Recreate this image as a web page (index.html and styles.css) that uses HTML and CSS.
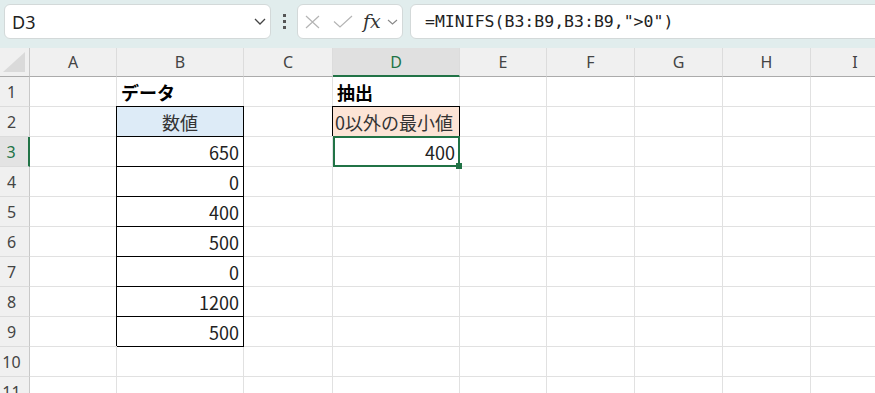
FILE: index.html
```html
<!DOCTYPE html>
<html lang="ja">
<head>
  <meta charset="UTF-8">
  <meta name="viewport" content="width=device-width, initial-scale=1.0">
  <title>MINIFS</title>
  <link rel="stylesheet" href="styles.css">
</head>
<body>
  <div class="ribbon">
    <div class="namebox">
      <span>D3</span>
      <svg class="chev" width="12" height="7" viewBox="0 0 12 7"><polyline points="1,1 6,6 11,1" fill="none" stroke="#444" stroke-width="1.3"/></svg>
    </div>
    <div class="more">
      <svg width="3" height="15" viewBox="0 0 3 15"><rect x="0" y="0" width="3" height="3" fill="#555"/><rect x="0" y="6" width="3" height="3" fill="#555"/><rect x="0" y="12" width="3" height="3" fill="#555"/></svg>
    </div>
    <div class="fxbox">
      <svg class="ico-x" width="15" height="14" viewBox="0 0 15 14"><path d="M1 1 L14 13 M14 1 L1 13" stroke="#b4b4b4" stroke-width="1.2" fill="none"/></svg>
      <svg class="ico-ok" width="20" height="13" viewBox="0 0 20 13"><polyline points="1,6.5 7,12 19,1" fill="none" stroke="#b4b4b4" stroke-width="1.2"/></svg>
      <span class="fx">fx</span>
      <svg class="ico-dd" width="11" height="6" viewBox="0 0 11 6"><polyline points="1,1 5.5,5 10,1" fill="none" stroke="#888" stroke-width="1.1"/></svg>
    </div>
    <div class="formula">=MINIFS(B3:B9,B3:B9,"&gt;0")</div>
  </div>

  <div class="sheet">
    <div class="head corner"><svg width="22" height="20" viewBox="0 0 22 20"><polygon points="22,0 22,20 0,20" fill="#dadada"/></svg></div>
    <div class="head">A</div><div class="head">B</div><div class="head">C</div><div class="head sel">D</div><div class="head">E</div><div class="head">F</div><div class="head">G</div><div class="head">H</div><div class="head">I</div>

    <div class="rh">1</div><div class="c"></div><div class="c bold">データ</div><div class="c"></div><div class="c bold">抽出</div><div class="c"></div><div class="c"></div><div class="c"></div><div class="c"></div><div class="c"></div>
    <div class="rh">2</div><div class="c"></div><div class="c box blue">数値</div><div class="c"></div><div class="c box orange">0以外の最小値</div><div class="c"></div><div class="c"></div><div class="c"></div><div class="c"></div><div class="c"></div>
    <div class="rh sel">3</div><div class="c"></div><div class="c box num">650</div><div class="c"></div><div class="c num active">400</div><div class="c"></div><div class="c"></div><div class="c"></div><div class="c"></div><div class="c"></div>
    <div class="rh">4</div><div class="c"></div><div class="c box num">0</div><div class="c"></div><div class="c"></div><div class="c"></div><div class="c"></div><div class="c"></div><div class="c"></div><div class="c"></div>
    <div class="rh">5</div><div class="c"></div><div class="c box num">400</div><div class="c"></div><div class="c"></div><div class="c"></div><div class="c"></div><div class="c"></div><div class="c"></div><div class="c"></div>
    <div class="rh">6</div><div class="c"></div><div class="c box num">500</div><div class="c"></div><div class="c"></div><div class="c"></div><div class="c"></div><div class="c"></div><div class="c"></div><div class="c"></div>
    <div class="rh">7</div><div class="c"></div><div class="c box num">0</div><div class="c"></div><div class="c"></div><div class="c"></div><div class="c"></div><div class="c"></div><div class="c"></div><div class="c"></div>
    <div class="rh">8</div><div class="c"></div><div class="c box num">1200</div><div class="c"></div><div class="c"></div><div class="c"></div><div class="c"></div><div class="c"></div><div class="c"></div><div class="c"></div>
    <div class="rh">9</div><div class="c"></div><div class="c box num">500</div><div class="c"></div><div class="c"></div><div class="c"></div><div class="c"></div><div class="c"></div><div class="c"></div><div class="c"></div>
    <div class="rh">10</div><div class="c"></div><div class="c"></div><div class="c"></div><div class="c"></div><div class="c"></div><div class="c"></div><div class="c"></div><div class="c"></div><div class="c"></div>
    <div class="rh">11</div><div class="c"></div><div class="c"></div><div class="c"></div><div class="c"></div><div class="c"></div><div class="c"></div><div class="c"></div><div class="c"></div><div class="c"></div>
  </div>
</body>
</html>
```

FILE: styles.css
```css
body {
  margin: 0;
  width: 875px;
  height: 393px;
  overflow: hidden;
  background: #fff;
  font-family: "Noto Sans", "Noto Sans CJK JP", sans-serif;
  color: #222;
}
.ribbon {
  display: flex;
  align-items: flex-start;
  width: 900px;
  height: 48px;
  box-sizing: border-box;
  padding: 4px 0 0 4px;
  background: #e1eded;
}
.namebox,
.fxbox,
.formula {
  height: 35px;
  box-sizing: border-box;
  background: #fff;
  border: 1px solid #d3d9d9;
  border-radius: 6px;
  display: flex;
  align-items: center;
}
.namebox {
  width: 267px;
  justify-content: space-between;
  padding: 0 4px 0 7px;
  font-size: 18px;
  color: #222;
}
.more {
  width: 26px;
  height: 35px;
  display: flex;
  align-items: center;
  justify-content: center;
}
.fxbox {
  width: 106px;
  padding-left: 7px;
}
.ico-ok {
  margin-left: 13px;
}
.fx {
  margin-left: 10px;
  font-family: "DejaVu Serif", "Liberation Serif", serif;
  font-style: italic;
  font-size: 19px;
  color: #333;
  line-height: 1;
}
.ico-dd {
  margin-left: 6px;
}
.formula {
  flex: 1;
  margin-left: 7px;
  padding-left: 14px;
  font-family: "DejaVu Sans Mono", "Liberation Mono", monospace;
  font-size: 16.5px;
  color: #222;
}
.sheet {
  display: grid;
  grid-template-columns: 30px 87px 127px 89px 127px 87px 88px 88px 88px 89px;
  grid-template-rows: 29px repeat(11, 30px);
  width: 900px;
}
.sheet > div {
  box-sizing: border-box;
  display: flex;
  align-items: center;
  white-space: nowrap;
}
.head {
  background: #f0f0f0;
  border-right: 1px solid #dcdcdc;
  border-bottom: 1px solid #ababab;
  justify-content: center;
  font-size: 16px;
  color: #444;
}
.head.corner {
  border-right-color: #c8c8c8;
  justify-content: flex-end;
  align-items: flex-end;
  padding: 0 4px 4px 0;
}
.head.sel {
  background: #e0e0e0;
  color: #217346;
  border-bottom: 2px solid #217346;
}
.rh {
  background: #f0f0f0;
  border-right: 1px solid #c8c8c8;
  border-bottom: 1px solid #dcdcdc;
  justify-content: center;
  padding-right: 6px;
  font-size: 16px;
  color: #444;
}
.rh.sel {
  background: #e3e3e3;
  color: #217346;
  border-right: 2px solid #217346;
}
.c {
  background: #fff;
  border-right: 1px solid #e1e1e1;
  border-bottom: 1px solid #e1e1e1;
  padding: 0 4px 0 4px;
  font-family: "Noto Sans CJK JP", sans-serif;
  font-size: 18px;
  color: #222;
}
.bold {
  font-weight: bold;
  color: #000;
}
.num {
  justify-content: flex-end;
}
.box {
  border-right-color: #000;
  border-bottom-color: #000;
  box-shadow: -1px -1px 0 #000, 0 -1px 0 #000;
}
.blue {
  background: #ddebf7;
  justify-content: center;
  color: #333;
}
.orange {
  background: #fce4d6;
  padding-left: 2px;
  color: #333;
}
.active {
  position: relative;
}
.active::after {
  content: "";
  position: absolute;
  top: -1px;
  left: 0;
  right: -1px;
  bottom: -1px;
  border: 2px solid #217346;
}
.active::before {
  content: "";
  position: absolute;
  right: -3px;
  bottom: -3px;
  width: 6px;
  height: 6px;
  background: #217346;
  z-index: 1;
}
```
